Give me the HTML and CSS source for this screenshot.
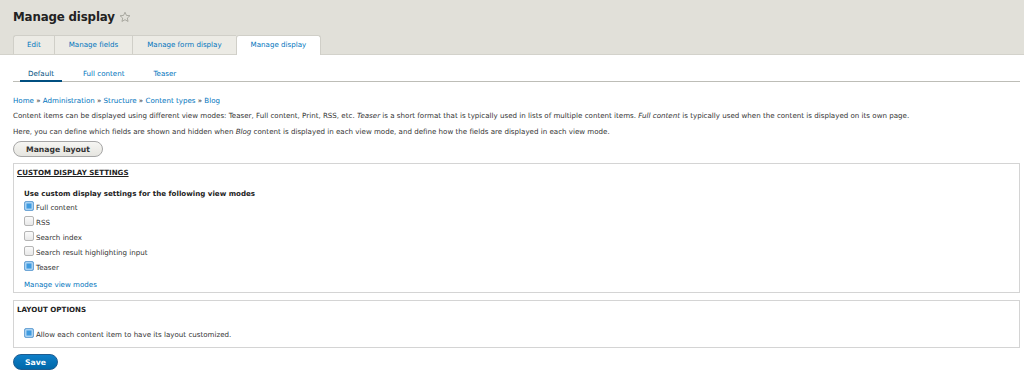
FILE: index.html
```html
<!DOCTYPE html>
<html lang="en">
<head>
<meta charset="utf-8">
<title>Manage display</title>
<link rel="stylesheet" href="styles.css">
</head>
<body>
<header class="page-header">
  <h1 class="page-title">Manage display <svg class="star" width="12" height="12" viewBox="0 0 24 24"><path d="M12 2.5l2.9 6.3 6.9.7-5.2 4.6 1.5 6.8L12 17.4l-6.1 3.5 1.5-6.8-5.2-4.6 6.9-.7z" fill="none" stroke="#9a9a92" stroke-width="1.6" stroke-linejoin="round"/></svg></h1>
  <nav class="tabs-primary">
    <a class="tab" href="#">Edit</a>
    <a class="tab" href="#">Manage fields</a>
    <a class="tab" href="#">Manage form display</a>
    <a class="tab tab-active" href="#">Manage display</a>
  </nav>
</header>
<main class="content">
  <nav class="tabs-secondary">
    <a class="subtab subtab-active" href="#">Default</a>
    <a class="subtab" href="#">Full content</a>
    <a class="subtab" href="#">Teaser</a>
  </nav>
  <div class="breadcrumb"><a href="#">Home</a> » <a href="#">Administration</a> » <a href="#">Structure</a> » <a href="#">Content types</a> » <a href="#">Blog</a></div>
  <p class="help">Content items can be displayed using different view modes: Teaser, Full content, Print, RSS, etc. <em>Teaser</em> is a short format that is typically used in lists of multiple content items. <em>Full content</em> is typically used when the content is displayed on its own page.</p>
  <p class="help">Here, you can define which fields are shown and hidden when <em>Blog</em> content is displayed in each view mode, and define how the fields are displayed in each view mode.</p>
  <button class="btn" type="button">Manage layout</button>
  <section class="fieldset">
    <div class="legend legend-link">CUSTOM DISPLAY SETTINGS</div>
    <div class="fieldset-body">
      <div class="group-title">Use custom display settings for the following view modes</div>
      <label class="check"><span class="box checked"></span>Full content</label>
      <label class="check"><span class="box"></span>RSS</label>
      <label class="check"><span class="box"></span>Search index</label>
      <label class="check"><span class="box"></span>Search result highlighting input</label>
      <label class="check"><span class="box checked"></span>Teaser</label>
      <a class="manage-link" href="#">Manage view modes</a>
    </div>
  </section>
  <section class="fieldset fieldset-2">
    <div class="legend">LAYOUT OPTIONS</div>
    <div class="fieldset-body body-2">
      <label class="check"><span class="box checked"></span>Allow each content item to have its layout customized.</label>
    </div>
  </section>
  <button class="btn btn-primary" type="button">Save</button>
</main>
</body>
</html>
```
FILE: styles.css
```css
* { box-sizing: border-box; }
html, body { margin: 0; padding: 0; background: #fff; }
body {
  font-family: "DejaVu Sans", Verdana, sans-serif;
  font-size: 7.1px;
  color: #333;
}
a { color: #0074bd; text-decoration: none; }

.page-header {
  background: #e1e0d9;
  border-bottom: 1px solid #d3d2cb;
  padding: 9px 0 0 13px;
  height: 55px;
}
.page-title {
  margin: 0;
  font-size: 11.8px;
  font-weight: bold;
  color: #222;
  line-height: 16px;
  height: 16px;
  display: flex;
  align-items: center;
  gap: 4px;
  letter-spacing: -0.15px;
}
.star { display: block; }

.tabs-primary {
  display: flex;
  margin-top: 10px;
}
.tab {
  display: block;
  height: 19px;
  line-height: 18px;
  padding: 0 14px;
  background: #ecebe5;
  border: 1px solid #d0cfc8;
  border-bottom: none;
  border-right: none;
  color: #0074bd;
}
.tab:first-child { border-radius: 3px 0 0 0; padding: 0 13px; }
.tab-active {
  background: #fff;
  border-right: 1px solid #d0cfc8;
  border-radius: 3px 3px 0 0;
  height: 20px;
  padding: 0 14px;
}

.content { padding: 0 4px 0 13px; }

.tabs-secondary {
  display: flex;
  border-bottom: 1px solid #bdbdb7;
  margin-top: 9px;
  height: 18px;
  padding-left: 7px;
}
.subtab {
  display: block;
  padding: 5px 8px 0;
  margin-right: 13px;
  color: #0074bd;
  height: 18px;
}
.subtab-active {
  color: #004f80;
  border-bottom: 2px solid #004f80;
}

.breadcrumb { margin-top: 13px; line-height: 11px; }
.help { margin: 4px 0 0; line-height: 11px; }
.help + .help { margin-top: 5px; }

.btn {
  display: block;
  font-family: "DejaVu Sans", Verdana, sans-serif;
  font-size: 7.7px;
  font-weight: bold;
  color: #333;
  height: 16px;
  padding: 0 12px;
  border: 1px solid #a6a6a6;
  border-radius: 10px;
  background: linear-gradient(#f6f6f3, #e6e5e0);
  margin-top: 4px;
}
.btn-primary {
  color: #fff;
  background: linear-gradient(#0f7fc8, #0068a9);
  border-color: #1e5c90;
  margin-top: 6px;
  padding: 0 11px;
}

.fieldset {
  border: 1px solid #d4d4d4;
  margin-top: 6px;
  background: #fff;
}
.legend {
  font-weight: bold;
  color: #222;
  padding: 4px 0 0 3px;
  height: 14px;
  line-height: 9px;
}
.legend-link { text-decoration: underline; }
.fieldset-body { padding: 11px 10px 2px; }
.group-title { font-weight: bold; color: #222; line-height: 10px; margin-bottom: 1px; }
.check {
  display: flex;
  align-items: center;
  height: 15px;
  gap: 2px;
}
.box {
  width: 10px;
  height: 10px;
  border: 1px solid #b5b5b5;
  border-radius: 2px;
  background: linear-gradient(#fbfbfb, #e8e8e8);
  margin-bottom: 3px;
  flex: none;
}
.box.checked {
  border-color: #6fa6d6;
  background: #3f9be0;
  box-shadow: inset 0 0 0 1.5px #aad2f2;
}
.manage-link { display: block; margin-top: 5px; line-height: 10px; }
.fieldset-2 { margin-top: 7px; }
.body-2 { padding: 12px 10px 5px; }
```
